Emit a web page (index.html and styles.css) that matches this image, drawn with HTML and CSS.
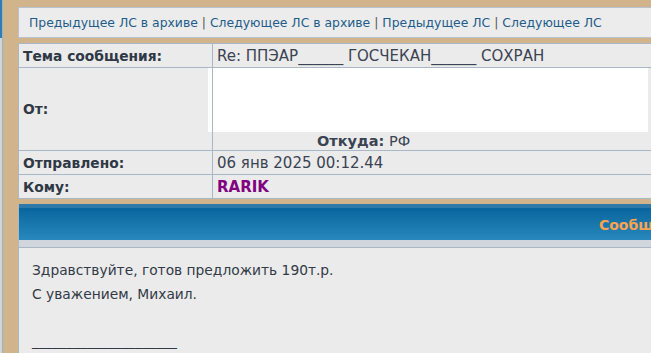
FILE: index.html
```html
<!DOCTYPE html>
<html lang="ru">

<head>
    <meta charset="UTF-8">
    <title>Личные сообщения</title>
    <link rel="stylesheet" href="styles.css">
</head>

<body>
    <div class="page">
        <!-- edge of the left frame -->
        <div class="side">
            <div class="side-top"></div>
        </div>

        <div class="main">
            <!-- PM navigation -->
            <div class="pm-nav">
                <a href="#">Предыдущее ЛС в архиве</a> <span class="sep">|</span>
                <a href="#">Следующее ЛС в архиве</a> <span class="sep">|</span>
                <a href="#">Предыдущее ЛС</a> <span class="sep">|</span>
                <a href="#">Следующее ЛС</a>
            </div>

            <!-- message header -->
            <table class="pm-head">
                <tr class="row-subject">
                    <td class="label">Тема сообщения:</td>
                    <td class="value">Re: ППЭАР______ ГОСЧЕКАН______ СОХРАН</td>
                </tr>
                <tr class="row-from">
                    <td class="label">От:</td>
                    <td class="value from">
                        <div class="hidden-box"></div>
                        <div class="from-place"><b>Откуда:</b> РФ</div>
                    </td>
                </tr>
                <tr class="row-date">
                    <td class="label">Отправлено:</td>
                    <td class="value">06 янв 2025 00:12.44</td>
                </tr>
                <tr class="row-to">
                    <td class="label">Кому:</td>
                    <td class="value"><b class="user">RARIK</b></td>
                </tr>
            </table>

            <!-- message -->
            <div class="post">
                <div class="post-title">Сообщение</div>
                <div class="post-sub"></div>
                <div class="post-body">
                    Здравствуйте, готов предложить 190т.р.<br>
                    С уважением, Михаил.<br>
                    <br>
                    <span class="sig-line">_____________________</span>
                </div>
            </div>
        </div>
    </div>
</body>

</html>
```

FILE: styles.css
```css
body {
    margin: 0;
    padding: 0;
    overflow: hidden;
    background-color: #d2b48c;
    font-family: "DejaVu Sans", Verdana, sans-serif;
    color: #323a46;
}

.page {
    display: flex;
    height: 353px;
}

.side {
    width: 2px;
    flex: none;
    background-color: #cdd4dc;
    border-right: 1px solid #9fb0c1;
}

.side-top {
    height: 38px;
    background-color: #2e7db3;
}

.main {
    flex: none;
    width: 1254px;
    padding-left: 15px;
}

.pm-nav {
    margin-top: 7px;
    height: 29px;
    line-height: 29px;
    padding-left: 10px;
    background-color: #ececec;
    border: 1px solid #b7c3cf;
    font-size: 12.4px;
    color: #555;
}

.pm-nav a {
    color: #1e5c8b;
    text-decoration: none;
}

.pm-head {
    margin-top: 5px;
    width: 100%;
    border-collapse: collapse;
    border: 1px solid #a9b8c6;
    background-color: #ebebeb;
}

.pm-head td {
    border: 1px solid #a9b8c6;
    padding: 0 4px;
    vertical-align: middle;
}

.label {
    width: 185px;
    font-size: 13.8px;
    font-weight: bold;
    color: #2f3845;
}

.value {
    font-size: 15px;
    padding-left: 3px;
    color: #3a4352;
}

.row-subject td {
    height: 23px;
}

.row-from td {
    height: 82px;
}

.row-date td,
.row-to td {
    height: 23px;
}

.from {
    vertical-align: top !important;
}

.hidden-box {
    width: 440px;
    height: 65px;
    margin: -1px 0 0 -9px;
    background-color: #fff;
}

.from-place {
    padding-left: 100px;
    line-height: 18px;
    font-size: 14.5px;
}

.user {
    color: #800080;
}

.post {
    margin-top: 5px;
    border-left: 1px solid #a9b8c6;
    background-color: #ebebeb;
}

.post-title {
    height: 32px;
    line-height: 34px;
    border-top: 4px solid #2f7aa8;
    background: linear-gradient(#08659d, #2889bd);
    text-align: center;
    font-size: 14px;
    font-weight: bold;
    color: #ffa34f;
}

.post-sub {
    height: 7px;
    background-color: #d1d6dd;
    border-bottom: 1px solid #a9b6c5;
}

.post-body {
    padding: 11px 13px;
    font-size: 13.8px;
    line-height: 23.5px;
}
```
